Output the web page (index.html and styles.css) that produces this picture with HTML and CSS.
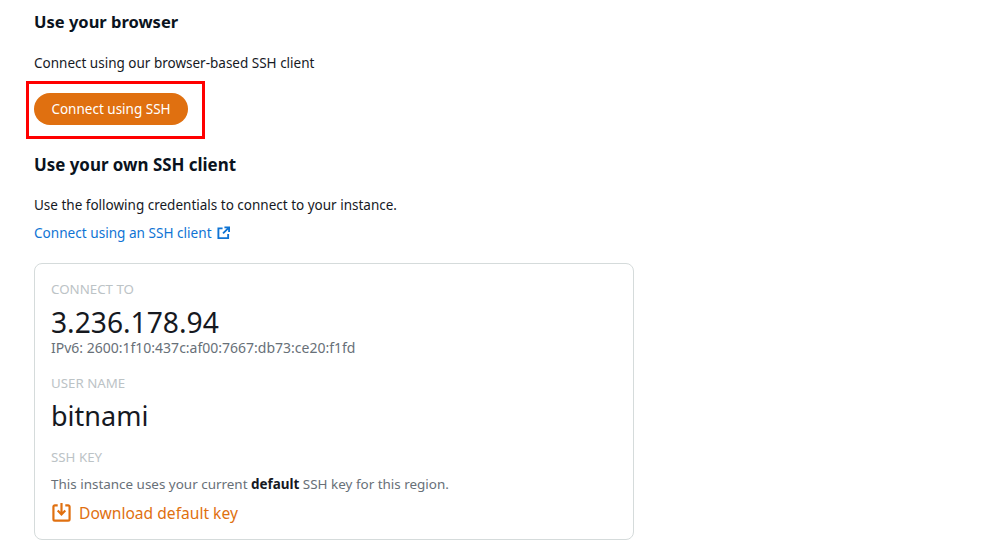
FILE: index.html
```html
<!DOCTYPE html>
<html lang="en">
<head>
  <meta charset="UTF-8" />
  <title>Connect</title>
  <link rel="stylesheet" href="styles.css">
</head>
<body>
  <main class="connect-tab">
    <h2>Use your browser</h2>
    <p class="intro">Connect using our browser-based SSH client</p>
    <div class="btn-row">
      <button class="ssh-btn">Connect using SSH</button>
      <span class="red-box"></span>
    </div>

    <h2 class="second">Use your own SSH client</h2>
    <p class="intro tight">Use the following credentials to connect to your instance.</p>
    <a class="ext-link" href="#">Connect using an SSH client
      <svg width="13" height="14" viewBox="0 0 14 14" fill="none" stroke="#0f74d4" stroke-width="2">
        <path d="M6 2H1.500v10.500H12V8"/>
        <path d="M8 1h5v5M13 1L6.500 7.500"/>
      </svg>
    </a>

    <section class="cred-card">
      <div class="label">CONNECT TO</div>
      <div class="big-value ip">3.236.178.94</div>
      <div class="sub">IPv6: 2600:1f10:437c:af00:7667:db73:ce20:f1fd</div>
      <div class="label user">USER NAME</div>
      <div class="big-value name">bitnami</div>
      <div class="label key">SSH KEY</div>
      <div class="key-note">This instance uses your current <b>default</b> SSH key for this region.</div>
      <a class="download" href="#">
        <svg width="19" height="19" viewBox="0 0 20 20" fill="none" stroke="#e07010" stroke-width="2.300">
          <path d="M6 2.500H3a1.500 1.500 0 0 0-1.500 1.500v13A1.500 1.500 0 0 0 3 18.500h14a1.500 1.500 0 0 0 1.500-1.500V4A1.500 1.500 0 0 0 17 2.500h-3"/>
          <path d="M10 0v12M6 8l4 4 4-4"/>
        </svg>
        Download default key
      </a>
    </section>
  </main>
</body>
</html>
```

FILE: styles.css
```css
body {
  margin: 0;
  padding: 0;
  font-family: "Noto Sans", "Open Sans", sans-serif;
  background-color: #fff;
  color: #16191f;
  height: 549px;
  overflow: hidden;
}
.connect-tab {
  width: 600px;
  padding: 11px 0 0 34px;
}
h2 {
  margin: 0;
  font-size: 16.500px;
  line-height: 22px;
  font-weight: 700;
  color: #0a1320;
}
h2.second {
  margin-top: 23px;
  font-size: 16.900px;
}
.intro {
  margin: 20px 0 0;
  font-size: 13.500px;
  line-height: 20px;
}
.intro.tight {
  margin-top: 19px;
}
.btn-row {
  position: relative;
  margin-top: 8px;
  height: 50px;
  padding-top: 12px;
  box-sizing: border-box;
}
.ssh-btn {
  display: block;
  width: 154px;
  height: 32px;
  border: none;
  border-radius: 16px;
  background-color: #e07010;
  color: #fff;
  font-family: inherit;
  font-size: 13.500px;
  padding: 0;
}
.red-box {
  position: absolute;
  left: -8px;
  top: -0.500px;
  width: 173px;
  height: 52.500px;
  border: 3px solid #f00;
}
.ext-link {
  display: flex;
  align-items: center;
  gap: 5px;
  margin-top: 8px;
  font-size: 13.600px;
  line-height: 20px;
  color: #0f74d4;
  text-decoration: none;
}
.cred-card {
  margin-top: 20px;
  box-sizing: border-box;
  width: 600px;
  height: 277px;
  padding: 16px 16px 0;
  border: 1px solid #d5dbdb;
  border-radius: 8px;
}
.label {
  font-size: 13.300px;
  line-height: 18px;
  color: #bcc3c6;
}
.big-value {
  font-size: 27px;
  line-height: 36px;
  color: #16191f;
}
.ip {
  margin-top: 6px;
  font-size: 28.200px;
}
.name {
  margin-top: 6px;
}
.sub {
  font-size: 14px;
  line-height: 16px;
  color: #687078;
}
.label.user {
  margin-top: 18px;
}
.label.key {
  margin-top: 14px;
}
.key-note {
  margin-top: 9px;
  font-size: 13.440px;
  line-height: 18px;
  color: #687078;
}
.key-note b {
  color: #16191f;
}
.download {
  display: flex;
  align-items: center;
  gap: 8px;
  margin-top: 8px;
  font-size: 15.600px;
  line-height: 24px;
  color: #e07010;
  text-decoration: none;
}
.download svg {
  margin-left: 1px;
  margin-top: -1px;
}
```
